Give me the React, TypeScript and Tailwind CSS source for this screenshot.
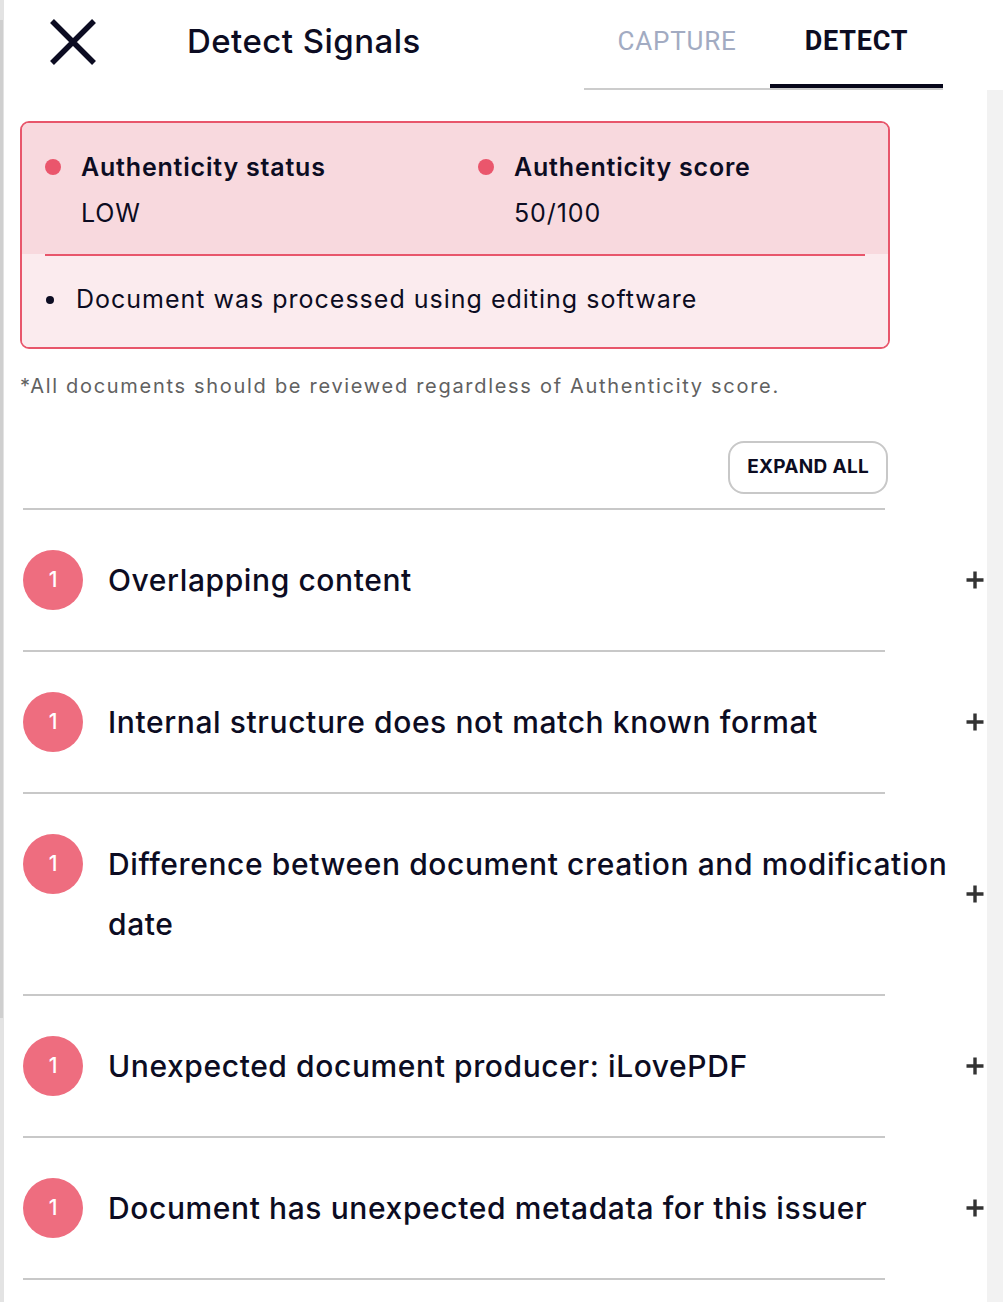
import React from "react";

const rows = [
  "Overlapping content",
  "Internal structure does not match known format",
  "Difference between document creation and modification date",
  "Unexpected document producer: iLovePDF",
  "Document has unexpected metadata for this issuer",
];

function PlusIcon() {
  return (
    <svg width="18" height="18" viewBox="0 0 18 18" className="shrink-0">
      <path d="M9 0.5v17M0.5 9h17" stroke="#333333" strokeWidth="3.4" />
    </svg>
  );
}

export default function App() {
  return (
    <div
      className="flex w-[1003px] min-h-[1302px] bg-white text-[#0c0c22]"
      style={{ fontFamily: "Inter, 'Noto Sans', sans-serif" }}
    >
      {/* left scrollbar strip */}
      <div className="flex w-[4px] flex-col bg-[#e3e3e3]">
        <div className="h-[20px]" />
        <div className="h-[998px] w-[3px] bg-[#cfcfcf]" />
      </div>

      <main className="flex-1 pl-[16px]">
        {/* header */}
        <header className="flex h-[90px] items-start">
          <div className="flex h-[84px] w-[167px] items-center pl-[29px]">
            <svg width="48" height="48" viewBox="0 0 48 48">
              <path d="M3 3L45 45M45 3L3 45" stroke="#0c0c22" strokeWidth="5.5" />
            </svg>
          </div>
          <h1 className="flex h-[84px] w-[397px] items-center text-[33px] font-medium tracking-[0.45px]">
            Detect Signals
          </h1>
          <div
            className="flex w-[359px] border-b-2 border-[#cccccc]"
            style={{ fontFamily: "Roboto, sans-serif" }}
          >
            <div className="flex h-[88px] w-[186px] items-center justify-center pb-[6px] text-[26px] tracking-[0.8px] text-[#a2abc2]">
              CAPTURE
            </div>
            <div className="flex h-[88px] w-[173px] items-center justify-center border-b-4 border-[#06061a] pb-[2px] text-[27px] font-bold tracking-[0.8px]">
              DETECT
            </div>
          </div>
        </header>

        {/* alert box */}
        <section className="mt-[31px] w-[870px] overflow-hidden rounded-[9px] border-2 border-[#e8566b]">
          <div className="grid h-[131px] grid-cols-2 bg-[#f8d9de]">
            {[
              ["Authenticity status", "LOW"],
              ["Authenticity score", "50/100"],
            ].map(([t, v]) => (
              <div key={t} className="pl-[23px] pt-[27px]">
                <div className="flex items-center gap-[20px]">
                  <span className="h-[16px] w-[16px] rounded-full bg-[#ea566c]" />
                  <span className="text-[25px] font-semibold leading-[34px] tracking-[0.8px]">{t}</span>
                </div>
                <div className="mt-[12px] pl-[36px] text-[25px] leading-[34px] tracking-[0.9px]">{v}</div>
              </div>
            ))}
          </div>
          <div className="bg-[#fbebee] px-[23px]">
            <div className="h-[2px] bg-[#e8566b]" />
          </div>
          <div className="flex h-[91px] items-center gap-[22px] bg-[#fbebee] pl-[24px] pb-[4px]">
            <span className="h-[8px] w-[8px] rounded-full bg-[#0c0c22]" />
            <span className="text-[25px] tracking-[1px]">Document was processed using editing software</span>
          </div>
        </section>

        <p className="mt-[24px] text-[20px] leading-[26px] tracking-[1.7px] text-[#616161]">
          *All documents should be reviewed regardless of Authenticity score.
        </p>

        {/* expand all */}
        <div className="mt-[42px] flex w-[870px] justify-end pr-[2px]">
          <button className="h-[53px] rounded-[16px] border-2 border-[#c8c8c8] px-[17px] text-[19px] font-bold tracking-[0.3px]">
            EXPAND ALL
          </button>
        </div>

        {/* list */}
        <div className="mt-[14px] pl-[3px]">
          {rows.map((r) => (
            <div key={r}>
              <div className="h-[2px] w-[862px] bg-[#c8c8c8]" />
              <div className="flex items-center py-[40px] pr-[3px]">
                <div className="flex flex-1 items-start gap-[25px]">
                  <span className="flex h-[60px] w-[60px] shrink-0 items-center justify-center rounded-full bg-[#ee6d7f] text-[21px] font-medium text-white">
                    1
                  </span>
                  <span className="text-[30px] font-medium leading-[60px] tracking-[0.6px]">{r}</span>
                </div>
                <PlusIcon />
              </div>
            </div>
          ))}
          <div className="h-[2px] w-[862px] bg-[#c8c8c8]" />
        </div>
      </main>

      {/* right scrollbar strip */}
      <div className="mt-[90px] w-[16px] bg-[#f2f2f2]" />
    </div>
  );
}
